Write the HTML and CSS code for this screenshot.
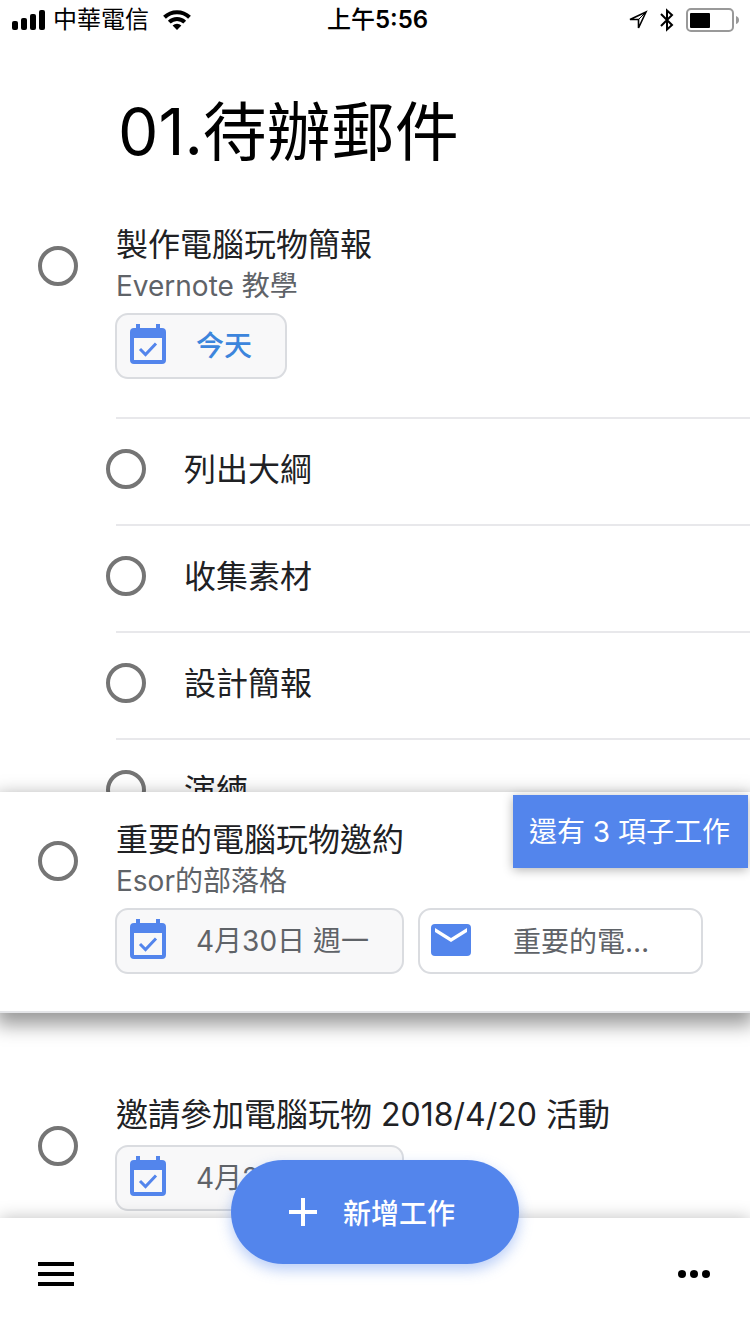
FILE: index.html
```
<!DOCTYPE html>
<html lang="zh-Hant">
<head>
<meta charset="UTF-8">
<meta name="viewport" content="width=device-width, initial-scale=1.0">
<title>01.待辦郵件</title>
<link rel="stylesheet" href="styles.css">
</head>
<body>

<!-- shared icons -->
<svg class="sprite" width="0" height="0" aria-hidden="true">
    <symbol id="calendar" viewBox="0 0 36 40">
        <path fill="currentColor" fill-rule="evenodd" d="M6 0h4v4h16V0h4v4h2a4 4 0 0 1 4 4v28a4 4 0 0 1-4 4H4a4 4 0 0 1-4-4V8a4 4 0 0 1 4-4h2zM4 14v22h28V14z"/>
        <path fill="none" stroke="currentColor" stroke-width="3" d="M10 25l5.500 5.500L26 19.500"/>
    </symbol>
</svg>

<div class="screen">
    <div class="status-bar">
        <div class="status-left">
            <svg width="34" height="20" viewBox="0 0 34 20" aria-hidden="true">
                <rect x="0" y="11" width="6" height="9" rx="2"/>
                <rect x="9" y="8" width="6" height="12" rx="2"/>
                <rect x="18" y="4" width="6" height="16" rx="2"/>
                <rect x="27" y="0" width="6" height="20" rx="2"/>
            </svg>
            <span class="carrier">中華電信</span>
            <svg width="28" height="20" viewBox="0 0 28 20" aria-hidden="true">
                <g fill="none" stroke="#000" stroke-width="4">
                    <path d="M1.500 7.200a18 18 0 0 1 25 0"/>
                    <path d="M6.300 12.100a11 11 0 0 1 15.400 0"/>
                </g>
                <path d="M14 20l-4.400-4.400a6.300 6.300 0 0 1 8.800 0z"/>
            </svg>
        </div>
        <div class="clock">上午<b>5:56</b></div>
        <div class="status-right">
            <svg width="20" height="20" viewBox="0 0 20 20" aria-hidden="true">
                <path fill="none" stroke="#000" stroke-width="1.600" d="M18 2L2 9.500h8.500V18z"/>
                <path fill="none" stroke="#000" stroke-width="1" d="M18 2l-7.500 7.500"/>
            </svg>
            <svg width="14" height="24" viewBox="0 0 14 24" aria-hidden="true">
                <path fill="none" stroke="#000" stroke-width="2" d="M1 6l11 11-5 4.500v-19L12 7 1 18"/>
            </svg>
            <svg width="53" height="24" viewBox="0 0 53 24" aria-hidden="true">
                <rect x="1" y="1" width="46" height="22" rx="4" fill="none" stroke="#999" stroke-width="2"/>
                <rect x="4" y="5" width="20" height="15" rx="1"/>
                <path fill="#999" d="M50 8q3 1 3 4t-3 4z"/>
            </svg>
        </div>
    </div>

    <main class="content">
        <h1>01.待辦郵件</h1>

        <section class="task">
            <input type="checkbox" class="check" id="task1">
            <div class="task-body">
                <label class="task-title" for="task1">製作電腦玩物簡報</label>
                <p class="note">Evernote 教學</p>
                <div class="chips">
                    <button class="chip today">
                        <svg width="36" height="40" aria-hidden="true"><use href="#calendar"/></svg>
                        今天
                    </button>
                </div>
            </div>
        </section>

        <ul class="subtasks">
            <li><input type="checkbox" class="check" id="sub1"><label for="sub1">列出大綱</label></li>
            <li><input type="checkbox" class="check" id="sub2"><label for="sub2">收集素材</label></li>
            <li><input type="checkbox" class="check" id="sub3"><label for="sub3">設計簡報</label></li>
            <li><input type="checkbox" class="check" id="sub4"><label for="sub4">演練</label></li>
        </ul>

        <section class="task dragging">
            <input type="checkbox" class="check" id="task2">
            <div class="task-body">
                <label class="task-title" for="task2">重要的電腦玩物邀約</label>
                <p class="note">Esor的部落格</p>
                <div class="chips">
                    <button class="chip date">
                        <svg width="36" height="40" aria-hidden="true"><use href="#calendar"/></svg>
                        4月30日 週一
                    </button>
                    <button class="chip mail">
                        <svg width="40" height="32" viewBox="0 0 40 32" aria-hidden="true">
                            <rect width="40" height="32" rx="4" fill="#5385ec"/>
                            <path fill="#fff" d="M4 4l16 10L36 4v4L20 18 4 8z"/>
                        </svg>
                        重要的電…
                    </button>
                </div>
            </div>
            <span class="badge">還有 3 項子工作</span>
        </section>

        <section class="task no-note">
            <input type="checkbox" class="check" id="task3">
            <div class="task-body">
                <label class="task-title" for="task3">邀請參加電腦玩物 2018/4/20 活動</label>
                <div class="chips">
                    <button class="chip date">
                        <svg width="36" height="40" aria-hidden="true"><use href="#calendar"/></svg>
                        4月20日 週五
                    </button>
                </div>
            </div>
        </section>
    </main>

    <footer class="bottom-bar">
        <button class="icon-btn" aria-label="選單">
            <svg width="36" height="24" viewBox="0 0 36 24"><path d="M0 0h36v4H0zM0 10h36v4H0zM0 20h36v4H0z"/></svg>
        </button>
        <button class="add-btn">
            <svg width="28" height="28" viewBox="0 0 28 28" aria-hidden="true"><path fill="#fff" d="M12 0h4v12h12v4H16v12h-4V16H0v-4h12z"/></svg>
            新增工作
        </button>
        <button class="icon-btn" aria-label="更多">
            <svg width="32" height="8" viewBox="0 0 32 8"><circle cx="4" cy="4" r="4"/><circle cx="16" cy="4" r="4"/><circle cx="28" cy="4" r="4"/></svg>
        </button>
    </footer>
</div>

</body>
</html>
```
FILE: styles.css
```
* {
    box-sizing: border-box;
}
body {
    margin: 0;
    background-color: #fff;
    color: #202124;
    font-family: Inter, "Noto Sans CJK TC", sans-serif;
}
button {
    font: inherit;
    color: inherit;
    border: none;
    background: none;
    padding: 0;
    cursor: pointer;
}
svg {
    display: block;
    flex: none;
}
.sprite {
    position: absolute;
}
.screen {
    display: flex;
    flex-direction: column;
    height: 100vh;
    overflow: hidden;
}

/* Status bar */
.status-bar {
    display: grid;
    grid-template-columns: 1fr auto 1fr;
    align-items: center;
    height: 40px;
    padding: 0 11px 0 12px;
    font-size: 24px;
    line-height: 34px;
    color: #000;
}
.status-left,
.status-right {
    display: flex;
    align-items: center;
}
.status-left {
    gap: 7px;
}
.carrier {
    margin-right: 7px;
}
.status-right {
    justify-content: flex-end;
    gap: 12px;
}
.clock {
    padding-left: 4px;
    font-weight: 500;
}
.clock b {
    font-weight: 600;
}

/* Task list */
.content {
    flex: 1;
    min-height: 0;
    overflow: hidden;
}
h1 {
    margin: 0;
    padding: 52px 38px 52px 118px;
    font-size: 64px;
    font-weight: 400;
    line-height: 80px;
    color: #000;
}
.task {
    display: flex;
    align-items: flex-start;
    gap: 37px;
    padding: 0 38px;
}
.check {
    appearance: none;
    flex: none;
    width: 40px;
    height: 40px;
    margin: 0;
    border: 4px solid #757575;
    border-radius: 50%;
}
.task .check {
    margin-top: 22px;
}
.task-body {
    flex: 1;
    min-width: 0;
}
.task-title {
    display: block;
    padding-left: 1px;
    font-size: 32px;
    line-height: 42px;
}
.note {
    margin: 0;
    padding-left: 1px;
    font-size: 28px;
    line-height: 40px;
    color: #5f6368;
}
.chips {
    display: flex;
    gap: 14px;
    margin-top: 7px;
}
.chip {
    display: flex;
    align-items: center;
    gap: 30px;
    height: 66px;
    padding: 0 33px 4px 13px;
    border: 2px solid #dadce0;
    border-radius: 13px;
    background-color: #f8f8f9;
    font-size: 28px;
    color: #5f6368;
    white-space: nowrap;
}
.chip svg {
    color: #5385ec;
}
.chip.today {
    color: #3c85dc;
    font-weight: 500;
}
.chip.date {
    min-width: 289px;
}
.chip.mail {
    min-width: 285px;
    gap: 42px;
    padding-bottom: 2px;
    padding-left: 11px;
    background-color: #fff;
}

.subtasks {
    margin: 38px 0 0 116px;
    padding: 0;
    list-style: none;
    font-size: 32px;
    line-height: 42px;
}
.subtasks li {
    display: flex;
    gap: 38px;
    padding: 30px 0 33px;
    border-top: 2px solid #e8e8eb;
}
.subtasks .check {
    margin-left: -10px;
}

/* Lifted card, lies over the end of the subtasks */
.dragging {
    position: relative;
    margin-top: -53px;
    padding-top: 27px;
    padding-bottom: 37px;
    border-bottom: 2px solid #e4e5e8;
    background-color: #fff;
    box-shadow: 0 8px 18px 4px rgba(0, 0, 0, 0.4);
}
.badge {
    position: absolute;
    top: 3px;
    right: 2px;
    padding: 16px 18px 14px 16px;
    background-color: #5385ec;
    box-shadow: 0 2px 10px rgba(0, 0, 0, 0.3);
    color: #fff;
    font-size: 28px;
    line-height: 43px;
}
.no-note {
    margin-top: 81px;
}
.no-note .check {
    margin-top: 32px;
}
.no-note .chips {
    margin-top: 9px;
}

/* Bottom bar */
.bottom-bar {
    position: relative;
    display: flex;
    align-items: center;
    justify-content: space-between;
    height: 116px;
    padding: 0 40px 4px 38px;
    background-color: #fff;
    box-shadow: 0 0 16px rgba(0, 0, 0, 0.25);
}
.add-btn {
    position: absolute;
    top: -58px;
    left: 50%;
    transform: translateX(-50%);
    display: flex;
    align-items: center;
    justify-content: center;
    gap: 26px;
    width: 288px;
    height: 104px;
    padding-right: 6px;
    border-radius: 52px;
    background-color: #5385ec;
    box-shadow: 0 6px 14px rgba(83, 133, 236, 0.4);
    color: #fff;
    font-size: 28px;
    font-weight: 500;
    white-space: nowrap;
}
```
